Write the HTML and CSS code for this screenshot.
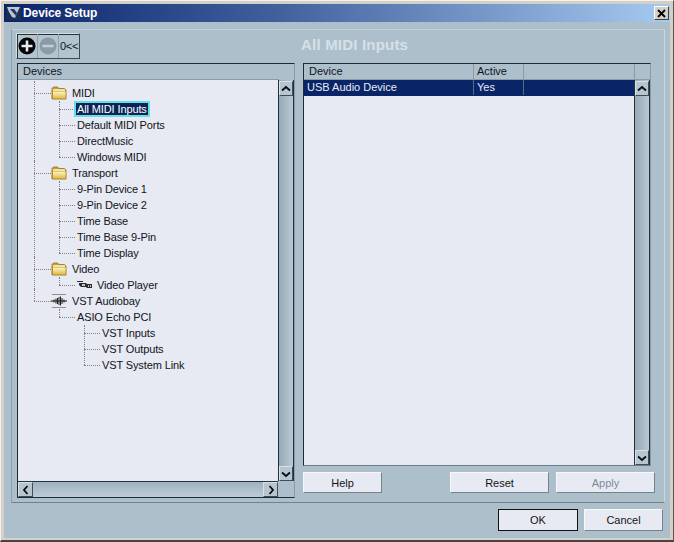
FILE: index.html
```html
<!DOCTYPE html>
<html lang="en">
<head>
<meta charset="utf-8">
<title>Device Setup</title>
<link rel="stylesheet" href="styles.css">
</head>
<body>
<svg class="defs" width="0" height="0" aria-hidden="true">
  <defs>
    <linearGradient id="fg" x1="0" y1="0" x2="0" y2="1"><stop offset="0" stop-color="#fff6c4"/><stop offset="1" stop-color="#e0b948"/></linearGradient>
    <symbol id="folder" viewBox="0 0 16 16">
      <path d="M1 5V3.500L2.500 2h4L8 3.500h5.500L15 5v9H1z" fill="#c79a2c" stroke="#a8822a" stroke-width="1"/>
      <path d="M2 6.500h12.500v7H2z" fill="url(#fg)"/>
      <path d="M2 5h12" stroke="#fff8d8" stroke-width="1.500"/>
    </symbol>
    <symbol id="up" viewBox="0 0 16 16"><path d="M4 9.500l4-3.500 4 3.500" fill="none" stroke="#0c0c0c" stroke-width="1.800"/></symbol>
    <symbol id="down" viewBox="0 0 16 16"><path d="M4 6.500l4 3.500 4-3.500" fill="none" stroke="#0c0c0c" stroke-width="1.800"/></symbol>
    <symbol id="left" viewBox="0 0 16 16"><path d="M9.500 4L6 8l3.500 4" fill="none" stroke="#0c0c0c" stroke-width="1.800"/></symbol>
    <symbol id="right" viewBox="0 0 16 16"><path d="M6.500 4L10 8l-3.500 4" fill="none" stroke="#0c0c0c" stroke-width="1.800"/></symbol>
  </defs>
</svg>
<div class="window">
  <header class="titlebar">
    <svg class="logo" width="15" height="14" viewBox="0 0 15 14" aria-hidden="true">
      <rect width="15" height="14" fill="#1d2d55"/>
      <path d="M1 1h13l-2 4L9 12 6 11 3 6z" fill="#b9c7d6"/>
      <path d="M4 3l6 7 1-3-3-4z" fill="#26385f"/>
    </svg>
    <span class="title">Device Setup</span>
    <button class="close" type="button" aria-label="Close">
      <svg width="9" height="9" viewBox="0 0 9 9" aria-hidden="true"><path d="M1 1l7 7M8 1L1 8" stroke="#000" stroke-width="1.800"/></svg>
    </button>
  </header>
  <main class="client">
    <section class="group">
      <div class="topbar">
        <div class="toolbar">
          <span class="tool">
            <svg width="18" height="18" viewBox="0 0 18 18" aria-hidden="true"><circle cx="9" cy="9" r="8.500" fill="#050505"/><path d="M9 3.500v11M3.500 9h11" stroke="#e8ecf0" stroke-width="2.600"/></svg>
          </span>
          <span class="tool">
            <svg width="18" height="18" viewBox="0 0 18 18" aria-hidden="true"><circle cx="9" cy="9" r="8.500" fill="#8b9ba6"/><path d="M3.500 9h11" stroke="#c3ced6" stroke-width="2.600"/></svg>
          </span>
          <span class="tool tool-text">0&lt;&lt;</span>
        </div>
        <h1 class="heading">All MIDI Inputs</h1>
      </div>
      <div class="panes">
        <div class="tree-pane">
          <div class="pane-head">Devices</div>
          <div class="tree-body">
            <div class="tree-scroll">
              <ul class="tree">
                <li class="node">
                  <div class="row row-1"><svg class="ico"><use href="#folder"/></svg><span>MIDI</span></div>
                  <ul class="sub">
                    <li class="row row-2"><span class="sel">All MIDI Inputs</span></li>
                    <li class="row row-2"><span>Default MIDI Ports</span></li>
                    <li class="row row-2"><span>DirectMusic</span></li>
                    <li class="row row-2"><span>Windows MIDI</span></li>
                  </ul>
                </li>
                <li class="node">
                  <div class="row row-1"><svg class="ico"><use href="#folder"/></svg><span>Transport</span></div>
                  <ul class="sub">
                    <li class="row row-2"><span>9-Pin Device 1</span></li>
                    <li class="row row-2"><span>9-Pin Device 2</span></li>
                    <li class="row row-2"><span>Time Base</span></li>
                    <li class="row row-2"><span>Time Base 9-Pin</span></li>
                    <li class="row row-2"><span>Time Display</span></li>
                  </ul>
                </li>
                <li class="node">
                  <div class="row row-1"><svg class="ico"><use href="#folder"/></svg><span>Video</span></div>
                  <ul class="sub">
                    <li class="row row-2 row-icon">
                      <svg class="ico-cam" width="16" height="8" viewBox="0 0 16 8" aria-hidden="true"><path d="M0 0h6v1H0zM2 2h7l1 1h5v4H10L9 6H4L2 4z" fill="#2a2a2a"/><path d="M5 3h3v2H5zM11 4h1v2h-1zM13 4h1v2h-1z" fill="#c8c8c8"/></svg>
                      <span>Video Player</span>
                    </li>
                  </ul>
                </li>
                <li class="node node-last">
                  <div class="row row-1"><svg class="ico" viewBox="0 0 16 16" aria-hidden="true"><path d="M1 1.500h14M1 14.500h14" stroke="#8d8d8d"/><path d="M0 8h16" stroke="#111"/><path d="M3 6.500v3M5 5.500v5M6.500 5v6M8 4v8M9.500 3.500v9M11 5v6M13 6.500v3" stroke="#222" stroke-width="1"/></svg><span>VST Audiobay</span></div>
                  <ul class="sub sub-one">
                    <li class="node-inner">
                      <div class="row row-2"><span>ASIO Echo PCI</span></div>
                      <ul class="sub sub-3">
                        <li class="row row-3"><span>VST Inputs</span></li>
                        <li class="row row-3"><span>VST Outputs</span></li>
                        <li class="row row-3"><span>VST System Link</span></li>
                      </ul>
                    </li>
                  </ul>
                </li>
              </ul>
            </div>
            <div class="vbar">
              <span class="sbtn"><svg width="16" height="16"><use href="#up"/></svg></span>
              <span class="sbtn"><svg width="16" height="16"><use href="#down"/></svg></span>
            </div>
          </div>
          <div class="hbar">
            <span class="sbtn"><svg width="16" height="16"><use href="#left"/></svg></span>
            <span class="sbtn"><svg width="16" height="16"><use href="#right"/></svg></span>
          </div>
        </div>
        <div class="right-col">
          <div class="list-pane">
            <div class="list-head">
              <span class="c1">Device</span><span class="c2">Active</span><span class="c3"></span><span class="c4"></span>
            </div>
            <div class="list-body">
              <div class="list-main">
                <div class="list-row">
                  <span class="c1">USB Audio Device</span><span class="c2">Yes</span><span class="c3"></span>
                </div>
              </div>
              <div class="vbar">
                <span class="sbtn"><svg width="16" height="16"><use href="#up"/></svg></span>
                <span class="sbtn"><svg width="16" height="16"><use href="#down"/></svg></span>
              </div>
            </div>
          </div>
          <div class="actions">
            <button class="btn" type="button">Help</button>
            <span class="spring"></span>
            <button class="btn" type="button">Reset</button>
            <button class="btn btn-off" type="button">Apply</button>
          </div>
        </div>
      </div>
    </section>
    <footer class="footer">
      <button class="btn btn-wide btn-default" type="button">OK</button>
      <button class="btn btn-wide" type="button">Cancel</button>
    </footer>
  </main>
</div>
</body>
</html>
```
FILE: styles.css
```css
* { box-sizing: border-box; }
html, body { margin: 0; padding: 0; }
body { width: 674px; height: 542px; overflow: hidden; background: #d4d0c8; font-family: "Liberation Sans", Arial, sans-serif; font-size: 11px; color: #101418; }
ul { list-style: none; margin: 0; padding: 0; }
.defs { position: absolute; }

.window { width: 674px; height: 542px; display: flex; flex-direction: column; padding: 3px 3px 2px; background: #d4d0c8; border-top: 1px solid #f4f2ec; border-left: 1px solid #f4f2ec; border-right: 1px solid #555; border-bottom: 2px solid #444; }

.titlebar { height: 18px; flex: none; display: flex; align-items: center; padding: 0 1px 0 2px; background: linear-gradient(90deg, #0a246a 0%, #3f5f9c 40%, #a6caf0 100%); }
.logo { flex: none; margin-right: 2px; }
.title { flex: 1; color: #fff; font-weight: bold; font-size: 12px; letter-spacing: -0.1px; }
.close { width: 15px; height: 14px; padding: 0; display: flex; align-items: center; justify-content: center; background: #d4d0c8; border: 1px solid; border-color: #fff #404040 #404040 #fff; }

.client { flex: 1; min-height: 0; background: #adbfcb; padding: 7px 3px 0 7px; display: flex; flex-direction: column; }

.group { height: 474px; flex: none; margin-right: 2px; padding: 3px 8px 0 5px; border: 1px solid; border-color: #c3d2dc #c8d6df #71828e #8ea0ac; }

.topbar { height: 30px; flex: none; display: flex; align-items: flex-start; }
.toolbar { width: 64px; height: 26px; margin-left: -1px; display: flex; background: #b3c4cf; border: 1px solid; border-color: #d2dde4 #3b4650 #3b4650 #d2dde4; box-shadow: inset 1px 1px 0 #27313a; }
.tool { width: 21px; display: flex; align-items: center; justify-content: center; border-right: 1px solid #8fa1ad; }
.tool-text { flex: 1; border-right: 0; font-size: 11px; letter-spacing: -0.3px; }
.heading { margin: 3px 0 0 221px; font-size: 15px; line-height: 18px; font-weight: bold; letter-spacing: 0.2px; color: #d6e0e7; }

.panes { flex: 1; min-height: 0; display: flex; gap: 8px; align-items: flex-start; }

.tree-pane { width: 278px; height: 435px; display: flex; flex-direction: column; border: 1px solid; border-color: #1f2a33 #8a9ba7 #1f2a33 #1f2a33; }
.pane-head { height: 16px; flex: none; line-height: 15px; padding-left: 5px; background: #adbfcb; border-bottom: 1px solid #8a9ba7; margin-right: 15px; }
.tree-body { flex: 1; min-height: 0; display: flex; }
.tree-scroll { flex: 1; background: #e7e9f3; padding: 5px 0 0; }
.tree { position: relative; }

.row { position: relative; height: 16px; display: flex; align-items: center; white-space: nowrap; letter-spacing: -0.12px; }
.row-1 { padding-left: 33px; gap: 5px; }
.row-2 { padding-left: 59px; }
.row-3 { padding-left: 84px; }
.ico { width: 16px; height: 16px; flex: none; }
.ico-cam { flex: none; margin-right: 4px; }
.row-icon { padding-left: 59px; }

/* dotted tree connectors drawn over the rows */
.node, .node-inner { position: relative; }
.node::before { content: ""; position: absolute; left: 16px; top: -4px; bottom: 0; border-left: 1px dotted #808080; }
.node-last::before { bottom: auto; height: 12px; }
.row-1::before { content: ""; position: absolute; left: 16px; width: 17px; top: 8px; border-top: 1px dotted #808080; }
.sub { position: relative; }
.sub::before { content: ""; position: absolute; left: 41px; top: 0; bottom: 8px; border-left: 1px dotted #808080; }
.sub-one::before { bottom: auto; height: 8px; }
.row-2::before { content: ""; position: absolute; left: 41px; width: 16px; top: 8px; border-top: 1px dotted #808080; }
.sub-3::before { left: 66px; }
.row-3::before { content: ""; position: absolute; left: 66px; width: 16px; top: 8px; border-top: 1px dotted #808080; }
.sel { position: relative; background: #0a2458; color: #fff; outline: 2px solid #62e0e4; outline-offset: -2px; padding: 2px 3px; margin-left: -3px; }

.vbar { width: 16px; flex: none; display: flex; flex-direction: column; justify-content: space-between; background: linear-gradient(90deg, #96a9b7, #b9c9d4); border-left: 1px solid #26323b; border-right: 1px solid #26323b; padding-top: 1px; }
.hbar { height: 16px; flex: none; margin-right: 16px; display: flex; justify-content: space-between; background: linear-gradient(180deg, #a0b2bf, #bccbd6); border-top: 1px solid #26323b; }
.sbtn { width: 15px; height: 15px; display: flex; align-items: center; justify-content: center; background: #b6c6d1; border: 1px solid; border-color: #d6e0e6 #404d57 #404d57 #d6e0e6; }
.vbar .sbtn { width: 14px; }
.sbtn svg { flex: none; }

.right-col { width: 352px; height: 431px; display: flex; flex-direction: column; }
.list-pane { width: 348px; height: 403px; flex: none; display: flex; flex-direction: column; border: 1px solid; border-color: #1f2a33 #8a9ba7 #6d7e8a #1f2a33; }
.list-head { height: 16px; flex: none; display: flex; line-height: 15px; background: #adbfcb; border-bottom: 1px solid #8a9ba7; }
.list-body { flex: 1; min-height: 0; display: flex; }
.list-main { flex: 1; background: #e7e9f3; }
.list-row { height: 16px; display: flex; line-height: 15px; background: #0a2468; color: #e8ecf4; border-bottom: 1px solid #0a2468; }
.c1 { width: 170px; padding-left: 5px; border-right: 1px solid #8a9ba7; }
.c2 { width: 50px; padding-left: 3px; border-right: 1px solid #8a9ba7; }
.c3 { flex: 1; }
.c4 { width: 16px; border-left: 1px solid #8a9ba7; }
.list-row .c1 { padding-left: 3px; border-right-color: #5a6c86; }
.list-row .c2 { border-right-color: #5a6c86; }

.actions { height: 21px; margin-top: 6px; flex: none; display: flex; gap: 7px; }
.spring { flex: 1; }
.btn { width: 99px; height: 21px; padding: 0; font: inherit; color: #101418; background: #e8eaf3; border: 1px solid; border-color: #f7f8fc #76838d #76838d #f7f8fc; }
.actions .btn:first-child { width: 79px; }
.btn-off { color: #7d8b98; }

.footer { flex: 1; display: flex; justify-content: flex-end; gap: 6px; padding: 6px 4px 0 0; }
.btn-wide { height: 22px; width: 79px; }
.btn-default { width: 80px; border-color: #111; }
```
